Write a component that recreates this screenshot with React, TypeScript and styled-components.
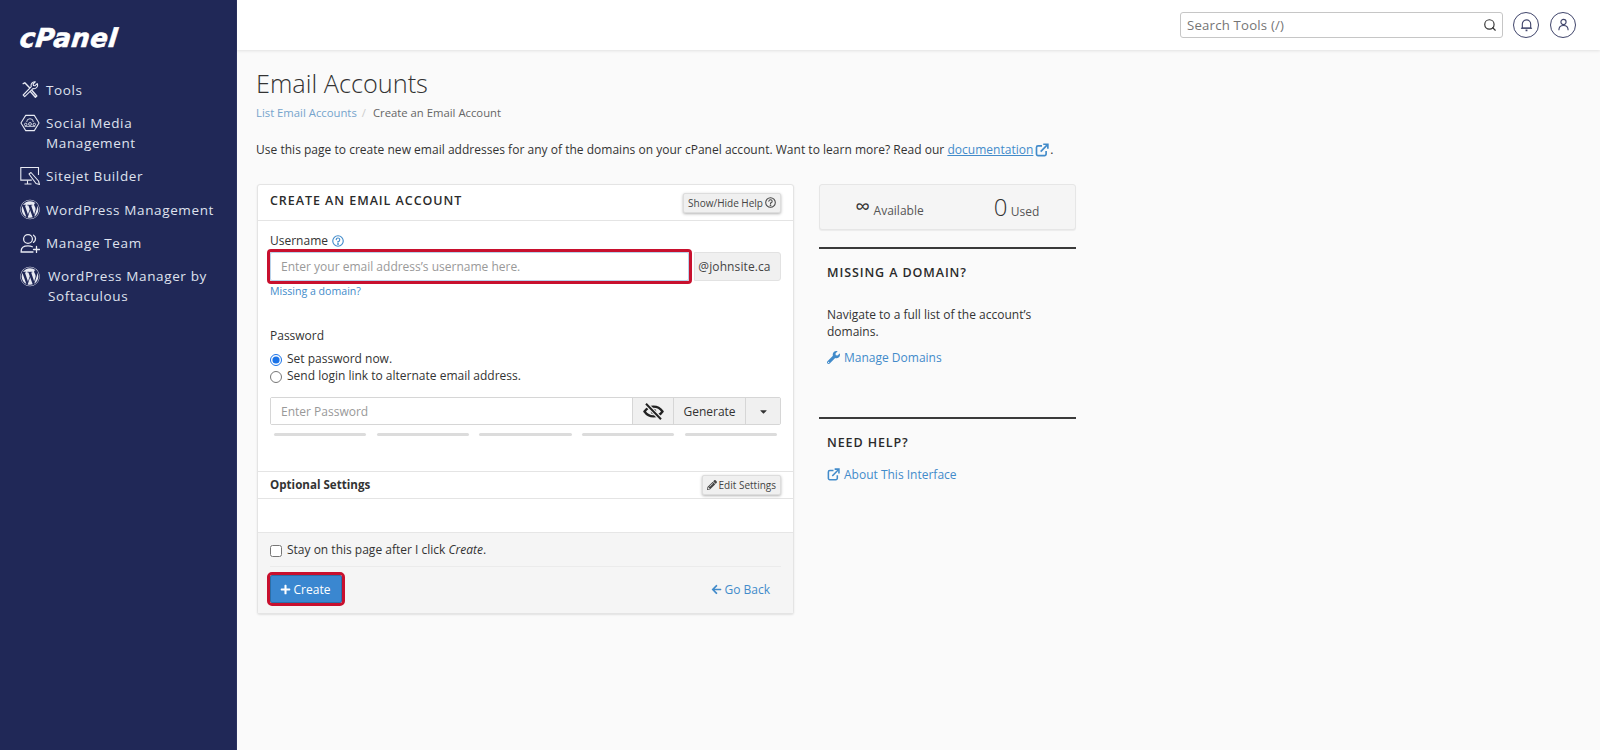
import React from "react";
import styled, { createGlobalStyle } from "styled-components";
import {
  FaWordpress,
  FaWrench,
  FaPencilAlt,
  FaPlus,
  FaArrowLeft,
  FaCaretDown,
} from "react-icons/fa";
import { LuSearch } from "react-icons/lu";

const Global = createGlobalStyle`
  html, body { margin: 0; padding: 0; height: 100%; background: #fafafa; }
  body { font-family: "Open Sans", "Liberation Sans", sans-serif; font-size: 12px; color: #333; overflow: hidden; }
  #root { height: 100%; }
  * { box-sizing: border-box; }
  input::placeholder { color: #999; opacity: 1; }
`;

const Shell = styled.div`
  display: flex;
  height: 750px;
  width: 1600px;
`;
const Sidebar = styled.nav`
  width: 237px;
  flex: none;
  background: #202857;
  border-right: 1px solid #2a3160;
  padding: 22px 0 0 20px;
`;
const Logo = styled.div`
  font-family: "DejaVu Sans", sans-serif;
  font-weight: 700;
  font-style: italic;
  font-size: 26px;
  line-height: 32px;
  letter-spacing: 0.4px;
  color: #fff;
  -webkit-text-stroke: 0.6px #fff;
  height: 32px;
  width: max-content;
  transform: skewX(-6deg);
`;
const NavList = styled.div`
  display: flex;
  flex-direction: column;
  margin-top: 25.5px;
  gap: 13.4px;
`;
const NavItem = styled.div<{ $gap?: number }>`
  display: flex;
  align-items: flex-start;
  gap: ${(p) => p.$gap ?? 6}px;
  color: #dfe2ee;
  font-size: 13.5px;
  line-height: 20px;
  letter-spacing: 0.63px;
`;
const NavIcon = styled.span`
  width: 20px;
  height: 20px;
  flex: none;
  display: flex;
  align-items: center;
  justify-content: center;
  color: #e8eaf3;
`;

const Main = styled.div`
  flex: 1;
  min-width: 0;
  display: flex;
  flex-direction: column;
`;
const TopBar = styled.header`
  height: 50px;
  flex: none;
  background: #fff;
  box-shadow: 0 1px 3px rgba(0, 0, 0, 0.1);
  display: flex;
  align-items: center;
  justify-content: flex-end;
  padding: 0 24px 0 0;
  gap: 11px;
`;
const SearchBox = styled.div`
  width: 323px;
  height: 26px;
  border: 1px solid #c6c6c6;
  border-radius: 3px;
  display: flex;
  align-items: center;
  justify-content: space-between;
  padding: 0 5px 1px 6px;
  margin-right: -1px;
  font-size: 13.2px;
  color: #757575;
  letter-spacing: 0.2px;
  background: #fff;
`;
const RoundButton = styled.button`
  width: 26px;
  height: 26px;
  border-radius: 50%;
  border: 1px solid #40456b;
  background: #fff;
  padding: 0;
  display: flex;
  align-items: center;
  justify-content: center;
  color: #40456b;
`;

const Content = styled.main`
  flex: 1;
  padding: 15px 0 0 19px;
`;
const Title = styled.h1`
  margin: 0;
  font-size: 25.3px;
  font-weight: 300;
  line-height: 36px;
  color: #333;
`;
const Crumbs = styled.div`
  margin-top: 2px;
  font-size: 11.3px;
  line-height: 20px;
  color: #666;
  display: flex;
  gap: 5px;
`;
const CrumbLink = styled.a`
  color: #75a4cc;
`;
const CrumbSep = styled.span`
  color: #ccc;
  margin-right: 2px;
`;
const Intro = styled.p`
  margin: 17px 0 0;
  font-size: 12px;
  line-height: 20px;
  color: #333;
  letter-spacing: 0.02px;
  white-space: nowrap;
`;
const DocLink = styled.a`
  color: #428bca;
  text-decoration: underline;
`;
const InlineIcon = styled.span`
  display: inline-flex;
  vertical-align: -3px;
  color: #428bca;
  margin: 0 1px 0 2px;
`;
const Columns = styled.div`
  display: flex;
  align-items: flex-start;
  gap: 25px;
  margin-top: 24px;
  margin-left: 1px;
`;
const Panel = styled.section`
  width: 537px;
  height: 430px;
  flex: none;
  background: #fff;
  border: 1px solid #e4e4e4;
  border-radius: 3px;
  box-shadow: 0 1px 2px rgba(0, 0, 0, 0.1);
  display: flex;
  flex-direction: column;
`;
const PanelHead = styled.div`
  height: 36px;
  flex: none;
  display: flex;
  align-items: center;
  justify-content: space-between;
  padding: 0 12px;
  border-bottom: 1px solid #e4e4e4;
`;
const PanelTitle = styled.h2`
  margin: 0 0 5px;
  font-size: 12.5px;
  font-weight: 600;
  letter-spacing: 0.95px;
  color: #2b2b2b;
  text-transform: uppercase;
`;
const MiniButton = styled.button`
  height: 20px;
  padding: 0 4px;
  border: 1px solid #ddd;
  background: #f0f0f0;
  box-shadow: 0 1px 3px rgba(0, 0, 0, 0.3);
  border-radius: 2px;
  font-family: inherit;
  font-size: 10px;
  color: #444;
  display: flex;
  align-items: center;
  gap: 2px;
  white-space: nowrap;
`;
const PanelBody = styled.div`
  height: 250px;
  flex: none;
  padding: 12px 12px 0;
`;
const FieldLabel = styled.div`
  font-size: 12px;
  font-weight: 500;
  line-height: 16px;
  color: #333;
  display: flex;
  align-items: center;
  gap: 4px;
  height: 16px;
`;
const HelpLink = styled.span`
  display: inline-flex;
  color: #428bca;
`;
const UserRow = styled.div`
  display: flex;
  margin-top: 3px;
  height: 29px;
  gap: 5px;
`;
const Highlight = styled.div`
  flex: 1;
  outline: 3px solid #c8102e;
  outline-offset: 0;
  border-radius: 1px;
  display: flex;
`;
const UserInput = styled.input`
  flex: 1;
  min-width: 0;
  border: 1px solid #b9d2ea;
  border-radius: 2px;
  padding: 0 10px;
  font-family: inherit;
  font-size: 12px;
  background: #fff;
`;
const Addon = styled.div`
  width: 87px;
  border: 1px solid #e2e2e2;
  border-radius: 0 3px 3px 0;
  background: #f0f0f0;
  display: flex;
  align-items: center;
  justify-content: center;
  padding-right: 6px;
  font-size: 12px;
  letter-spacing: 0.1px;
  color: #444;
`;
const SmallLink = styled.a`
  display: block;
  margin-top: 3px;
  font-size: 10.6px;
  line-height: 15px;
  color: #428bca;
`;
const PasswordBlock = styled.div`
  margin-top: 29px;
`;
const Radios = styled.div`
  margin-top: 6px;
  display: flex;
  flex-direction: column;
`;
const CheckLine = styled.label`
  display: flex;
  align-items: center;
  gap: 5px;
  height: 17px;
  font-size: 12px;
  color: #333;
`;
const Tick = styled.input`
  margin: 2px 0 0;
  width: 12px;
  height: 12px;
  flex: none;
  accent-color: #1a73e8;
`;
const PassGroup = styled.div`
  margin-top: 13px;
  height: 28px;
  display: flex;
  border: 1px solid #d6d6d6;
  border-radius: 2px;
`;
const PassInput = styled.input`
  flex: 1;
  min-width: 0;
  border: none;
  padding: 0 10px;
  font-family: inherit;
  font-size: 12px;
  background: #fff;
`;
const GroupButton = styled.button<{ $w: number }>`
  width: ${(p) => p.$w}px;
  flex: none;
  border: none;
  border-left: 1px solid #d6d6d6;
  background: #f0f0f0;
  padding: 0;
  font-family: inherit;
  font-size: 12px;
  color: #333;
  display: flex;
  align-items: center;
  justify-content: center;
`;
const Strength = styled.div`
  margin: 8px 4px 0;
  display: grid;
  grid-template-columns: repeat(5, 1fr);
  gap: 10.5px;
`;
const StrengthBar = styled.div`
  height: 3px;
  border-radius: 2px;
  background: #dcdcdc;
`;
const OptionalBar = styled.div`
  height: 28px;
  flex: none;
  border-top: 1px solid #e4e4e4;
  border-bottom: 1px solid #e4e4e4;
  display: flex;
  align-items: center;
  justify-content: space-between;
  padding: 0 12px;
`;
const OptionalTitle = styled.div`
  font-size: 11.6px;
  font-weight: 700;
  color: #333;
  margin-bottom: 1px;
`;
const Spacer = styled.div`
  height: 33px;
  flex: none;
`;
const PanelFoot = styled.div`
  flex: 1;
  background: #f5f5f5;
  border-top: 1px solid #e6e6e6;
  padding: 8px 12px 0;
  display: flex;
  flex-direction: column;
`;
const FootRule = styled.div`
  height: 1px;
  background: #ebebeb;
  margin-top: 8px;
`;
const Actions = styled.div`
  display: flex;
  align-items: center;
  justify-content: space-between;
  margin-top: 8px;
  height: 28px;
`;
const CreateHighlight = styled.div`
  outline: 3px solid #c8102e;
  border-radius: 2px;
  display: flex;
`;
const CreateButton = styled.button`
  width: 72px;
  height: 28px;
  border: 1px solid #2a6ea9;
  border-radius: 2px;
  background: #3a87d0;
  color: #fff;
  font-family: inherit;
  font-size: 12px;
  display: flex;
  align-items: center;
  justify-content: center;
  gap: 3px;
  padding: 0 2px 0 0;
`;
const GoBack = styled.a`
  color: #428bca;
  font-size: 12px;
  display: flex;
  align-items: center;
  gap: 2px;
  margin-right: 11px;
`;
const Aside = styled.aside`
  width: 257px;
  flex: none;
`;
const StatBox = styled.div`
  height: 46px;
  background: #f5f5f5;
  border: 1px solid #e6e6e6;
  border-radius: 3px;
  box-shadow: 0 1px 1px rgba(0, 0, 0, 0.06);
  display: grid;
  grid-template-columns: 125px 129px;
  align-items: center;
  justify-items: center;
  padding: 0 0 0 7px;
`;
const Stat = styled.div`
  display: flex;
  align-items: baseline;
  gap: 3.5px;
  font-size: 12px;
  color: #555;
`;
const StatValue = styled.span`
  font-size: 24px;
  font-weight: 300;
  line-height: 24px;
  color: #333;
`;
const InfinityMark = styled.span`
  font-size: 21px;
  line-height: 22px;
  color: #333;
  position: relative;
  top: -1px;
`;
const SideSection = styled.div<{ $h: number; $top: number }>`
  border-top: 2px solid #3a3a3a;
  height: ${(p) => p.$h}px;
  margin-top: ${(p) => p.$top}px;
  padding: 15px 8px 0;
`;
const SideTitle = styled.h3`
  margin: 0;
  font-size: 12.5px;
  font-weight: 600;
  line-height: 17px;
  letter-spacing: 0.9px;
  text-transform: uppercase;
  color: #2b2b2b;
`;
const SideText = styled.p`
  margin: 25px 0 0;
  font-size: 12px;
  line-height: 17px;
  color: #333;
`;
const SideLink = styled.a<{ $top: number }>`
  margin-top: ${(p) => p.$top}px;
  display: flex;
  align-items: center;
  gap: 4px;
  color: #428bca;
  font-size: 12px;
  line-height: 17px;
`;

const ExtIcon = ({ size = 14 }: { size?: number }) => (
  <svg width={size} height={size} viewBox="0 0 16 16" fill="none" stroke="currentColor" strokeWidth="1.9">
    <path d="M8 3.2H3.5A1.8 1.8 0 0 0 1.7 5v7.6a1.8 1.8 0 0 0 1.8 1.8h7.4a1.8 1.8 0 0 0 1.8-1.8V9" />
    <path d="M6.5 9.8 14 2.2" />
    <path d="M9.4 1.4h5.3v5.3" strokeLinejoin="miter" />
  </svg>
);
const HelpIcon = ({ size = 11 }: { size?: number }) => (
  <svg width={size} height={size} viewBox="0 0 16 16" fill="none" stroke="currentColor" strokeWidth="1.5" strokeLinecap="round">
    <circle cx="8" cy="8" r="7" />
    <path d="M5.6 6.2A2.4 2.4 0 1 1 8 8.8v1" />
    <circle cx="8" cy="12" r="0.5" fill="currentColor" />
  </svg>
);
const ToolsIcon = () => (
  <svg width="18" height="18" viewBox="0 0 18 18" fill="none" stroke="currentColor" strokeWidth="1.4" strokeLinecap="round" strokeLinejoin="round">
    <path d="M2.2 2.6 3.8 1.8 8.6 6.8M10.8 9.2l5 5.8-1.4 1.2-5.2-5.8" />
    <path d="M16.2 2.6l-2.4 2.2-1.3-.3-.4-1.5L14.3.8a3.6 3.6 0 0 0-4 4.8L2.2 14l1.5 1.6 8.2-8a3.6 3.6 0 0 0 4.3-5z" strokeWidth="1.1" fill="#202857" />
  </svg>
);
const SocialIcon = () => (
  <svg width="22" height="22" viewBox="0 0 21 21" fill="none" stroke="currentColor" strokeWidth="0.9">
    <path d="M6 2.5h9l5 8-5 8H6l-5-8z" strokeWidth="1.1" strokeLinejoin="round" />
    <path d="M7 9.5a3.5 3.5 0 0 1 7 0" />
    <circle cx="10.5" cy="11.5" r="1.5" />
    <circle cx="6" cy="12" r="1.3" />
    <circle cx="15" cy="12" r="1.3" />
    <path d="M5 14h11" />
  </svg>
);
const SitejetIcon = () => (
  <svg width="20" height="20" viewBox="0 0 20 20" fill="none" stroke="currentColor" strokeWidth="1.1">
    <path d="M18.5 9V1.5H.8v12.6h11" />
    <path d="M7.5 14.5v3M4.5 18h7" />
    <path d="M9 8l2-1.5 7.5 8.5 1 3.5-3.5-1z" strokeLinejoin="round" />
  </svg>
);
const TeamIcon = () => (
  <svg width="20" height="20" viewBox="0 0 20 20" fill="none" stroke="currentColor" strokeWidth="1.3" strokeLinecap="round">
    <circle cx="8" cy="6" r="4.4" />
    <path d="M13.5 2.2a4.2 4.2 0 0 1 0 7.2" />
    <path d="M13 19H1.2v-1.2c0-3 2.6-5 6.8-5 1.8 0 3.2.3 4.3.9" />
    <path d="M16.5 13.5v6M13.5 16.5h6" />
  </svg>
);
const BellIcon = () => (
  <svg width="13" height="14" viewBox="0 0 14 15" fill="none" stroke="currentColor" strokeWidth="1.2">
    <path d="M2.5 10.8V6.5a4.5 4.5 0 0 1 9 0v4.3z" />
    <path d="M1 11h12" />
    <path d="M6 13.3h2" strokeWidth="1.8" />
  </svg>
);
const UserIcon = () => (
  <svg width="13" height="14" viewBox="0 0 14 15" fill="none" stroke="currentColor" strokeWidth="1.2">
    <circle cx="7" cy="4.2" r="2.8" />
    <path d="M2 13.2c0-3.2 2.2-5.2 5-5.2s5 2 5 5.2" />
  </svg>
);
const EyeOffIcon = () => (
  <svg width="21" height="17" viewBox="0 0 21 17" fill="none" stroke="#222" strokeWidth="2.3">
    <path d="M1.5 8.5C3.8 5.2 6.8 3.6 10.5 3.6s6.7 1.6 9 4.9c-2.3 3.3-5.3 4.9-9 4.9s-6.7-1.6-9-4.9z" />
    <circle cx="10.5" cy="8.5" r="1.6" fill="#222" />
    <path d="M3 .8 18 16.2" stroke="#f0f0f0" strokeWidth="4.4" />
    <path d="M3 .8 18 16.2" strokeWidth="2" />
  </svg>
);

export default function App() {
  return (
    <>
      <Global />
      <Shell>
        <Sidebar>
          <Logo>cPanel</Logo>
          <NavList>
            <NavItem>
              <NavIcon><ToolsIcon /></NavIcon>
              Tools
            </NavItem>
            <NavItem>
              <NavIcon><SocialIcon /></NavIcon>
              <span>Social Media<br />Management</span>
            </NavItem>
            <NavItem>
              <NavIcon><SitejetIcon /></NavIcon>
              Sitejet Builder
            </NavItem>
            <NavItem>
              <NavIcon><FaWordpress size={21} /></NavIcon>
              WordPress Management
            </NavItem>
            <NavItem>
              <NavIcon><TeamIcon /></NavIcon>
              Manage Team
            </NavItem>
            <NavItem $gap={8}>
              <NavIcon><FaWordpress size={21} /></NavIcon>
              <span>WordPress Manager by<br />Softaculous</span>
            </NavItem>
          </NavList>
        </Sidebar>
        <Main>
          <TopBar>
            <SearchBox>
              Search Tools (/)
              <LuSearch size={14} color="#333" />
            </SearchBox>
            <RoundButton aria-label="Notifications"><BellIcon /></RoundButton>
            <RoundButton aria-label="User"><UserIcon /></RoundButton>
          </TopBar>
          <Content>
            <Title>Email Accounts</Title>
            <Crumbs>
              <CrumbLink>List Email Accounts</CrumbLink>
              <CrumbSep>/</CrumbSep>
              <span>Create an Email Account</span>
            </Crumbs>
            <Intro>
              Use this page to create new email addresses for any of the domains on your cPanel account. Want to learn more? Read our{" "}
              <DocLink>documentation</DocLink>
              <InlineIcon><ExtIcon /></InlineIcon>.
            </Intro>
            <Columns>
              <Panel>
                <PanelHead>
                  <PanelTitle>Create an Email Account</PanelTitle>
                  <MiniButton>Show/Hide Help <HelpIcon /></MiniButton>
                </PanelHead>
                <PanelBody>
                  <FieldLabel>
                    Username
                    <HelpLink><HelpIcon size={12} /></HelpLink>
                  </FieldLabel>
                  <UserRow>
                    <Highlight>
                      <UserInput placeholder="Enter your email address’s username here." />
                    </Highlight>
                    <Addon>@johnsite.ca</Addon>
                  </UserRow>
                  <SmallLink>Missing a domain?</SmallLink>
                  <PasswordBlock>
                    <FieldLabel>Password</FieldLabel>
                    <Radios>
                      <CheckLine><Tick type="radio" name="pw" defaultChecked /><span>Set password now.</span></CheckLine>
                      <CheckLine><Tick type="radio" name="pw" /><span>Send login link to alternate email address.</span></CheckLine>
                    </Radios>
                    <PassGroup>
                      <PassInput placeholder="Enter Password" />
                      <GroupButton $w={41} aria-label="Show password"><EyeOffIcon /></GroupButton>
                      <GroupButton $w={72}>Generate</GroupButton>
                      <GroupButton $w={35} aria-label="More"><FaCaretDown size={11} /></GroupButton>
                    </PassGroup>
                    <Strength>
                      <StrengthBar /><StrengthBar /><StrengthBar /><StrengthBar /><StrengthBar />
                    </Strength>
                  </PasswordBlock>
                </PanelBody>
                <OptionalBar>
                  <OptionalTitle>Optional Settings</OptionalTitle>
                  <MiniButton><FaPencilAlt size={10} /> Edit Settings</MiniButton>
                </OptionalBar>
                <Spacer />
                <PanelFoot>
                  <CheckLine><Tick type="checkbox" /><span>Stay on this page after I click <em>Create</em>.</span></CheckLine>
                  <FootRule />
                  <Actions>
                    <CreateHighlight>
                      <CreateButton><FaPlus size={11} /> Create</CreateButton>
                    </CreateHighlight>
                    <GoBack><FaArrowLeft size={11} /> Go Back</GoBack>
                  </Actions>
                </PanelFoot>
              </Panel>
              <Aside>
                <StatBox>
                  <Stat><InfinityMark>∞</InfinityMark> Available</Stat>
                  <Stat><StatValue>0</StatValue> Used</Stat>
                </StatBox>
                <SideSection $h={170} $top={17}>
                  <SideTitle>Missing a Domain?</SideTitle>
                  <SideText>Navigate to a full list of the account’s domains.</SideText>
                  <SideLink $top={9}><FaWrench size={13} /> Manage Domains</SideLink>
                </SideSection>
                <SideSection $h={80} $top={0}>
                  <SideTitle>Need Help?</SideTitle>
                  <SideLink $top={15}><ExtIcon size={13} /> About This Interface</SideLink>
                </SideSection>
              </Aside>
            </Columns>
          </Content>
        </Main>
      </Shell>
    </>
  );
}
